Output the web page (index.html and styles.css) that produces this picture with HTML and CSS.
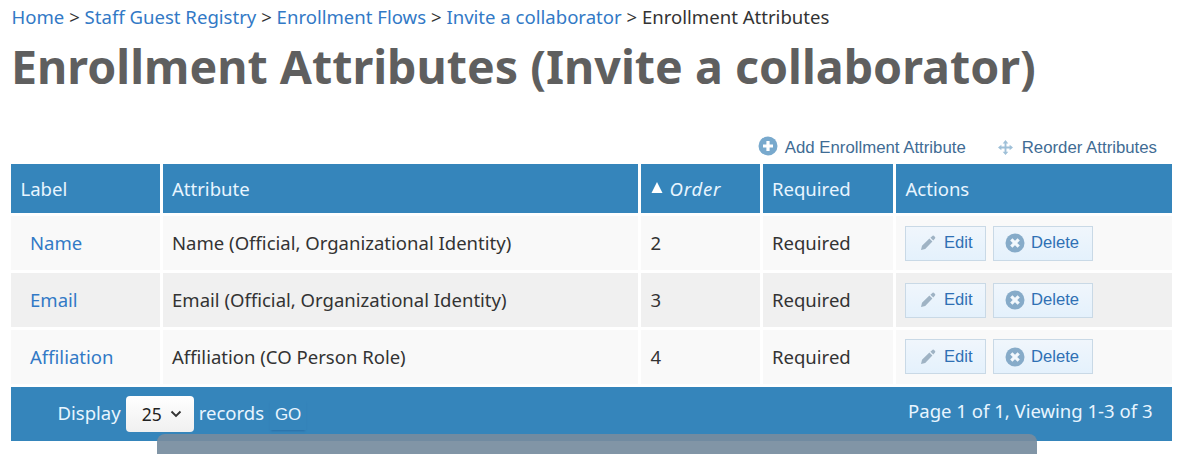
FILE: index.html
```html
<!DOCTYPE html>
<html lang="en">
<head>
<meta charset="utf-8">
<title>Enrollment Attributes</title>
<link rel="stylesheet" href="styles.css">
</head>
<body>
<svg class="defs" aria-hidden="true">
  <symbol id="plus" viewBox="0 0 20 20"><circle cx="10" cy="10" r="9.5" fill="#78a9cd"/><path d="M10 5v10M5 10h10" stroke="#fff" stroke-width="3.2"/></symbol>
  <symbol id="move" viewBox="0 0 16 16"><path d="M8 2v12M2 8h12" stroke="#9fc0d8" stroke-width="2"/><path d="M8 0l3 3.600H5zM8 16l3-3.600H5zM0 8l3.600-3v6zM16 8l-3.600-3v6z" fill="#9fc0d8"/></symbol>
  <symbol id="pencil" viewBox="0 0 16 16"><path d="M1 15l1-4.200L9.400 3.600l3 3L5.200 14zM10.400 2.700L12.600.8q.8-.5 1.500.2l.9.9q.7.8 0 1.500L13.300 5.600z" fill="#9fb3c4"/></symbol>
  <symbol id="cross" viewBox="0 0 20 20"><circle cx="10" cy="10" r="9.500" fill="#86abc9"/><path d="M6.300 6.300l7.400 7.400M13.700 6.300l-7.400 7.400" stroke="#f2f8fd" stroke-width="3.200"/></symbol>
</svg>
<nav class="crumbs"><a>Home</a> &gt; <a>Staff Guest Registry</a> &gt; <a>Enrollment Flows</a> &gt; <a>Invite a collaborator</a> &gt; <span>Enrollment Attributes</span></nav>
<h1 class="title">Enrollment Attributes (Invite a collaborator)</h1>
<div class="tools">
  <a class="tool"><svg class="i-plus"><use href="#plus"/></svg>Add Enrollment Attribute</a>
  <a class="tool"><svg class="i-move"><use href="#move"/></svg>Reorder Attributes</a>
</div>
<main class="grid">
  <div class="row head"><div>Label</div><div>Attribute</div><div><svg class="sort" viewBox="0 0 12 11"><path d="M6 0l5.500 11H.5z" fill="#fff"/></svg><i>Order</i></div><div>Required</div><div>Actions</div></div>
  <div class="row"><div class="label"><a>Name</a></div><div>Name (Official, Organizational Identity)</div><div>2</div><div>Required</div><div class="actions"><a class="btn edit"><svg><use href="#pencil"/></svg>Edit</a><a class="btn delete"><svg><use href="#cross"/></svg>Delete</a></div></div>
  <div class="row alt"><div class="label"><a>Email</a></div><div>Email (Official, Organizational Identity)</div><div>3</div><div>Required</div><div class="actions"><a class="btn edit"><svg><use href="#pencil"/></svg>Edit</a><a class="btn delete"><svg><use href="#cross"/></svg>Delete</a></div></div>
  <div class="row last"><div class="label"><a>Affiliation</a></div><div>Affiliation (CO Person Role)</div><div>4</div><div>Required</div><div class="actions"><a class="btn edit"><svg><use href="#pencil"/></svg>Edit</a><a class="btn delete"><svg><use href="#cross"/></svg>Delete</a></div></div>
  <footer class="pager">
    <span class="display">Display</span><span class="select">25<svg viewBox="0 0 12 8"><path d="M1.500 1.500L6 6l4.500-4.500" fill="none" stroke="#333" stroke-width="1.900"/></svg></span><span class="records">records</span><span class="go">GO</span>
    <span class="status">Page 1 of 1, Viewing 1-3 of 3</span>
  </footer>
</main>
<div class="overlay"></div>
</body>
</html>
```
FILE: styles.css
```css
* { box-sizing: border-box; }
body { margin: 0; height: 454px; overflow: hidden; background: #fff; color: #333; font: 18.55px/24px "Noto Sans", sans-serif; position: relative; }
a { color: #3279c6; }
.defs { display: none; }
.crumbs { padding: 5px 0 0 11.5px; font-size: 18.57px; white-space: nowrap; }
.title { margin: 5px 0 0 11px; font-size: 46.55px; line-height: 64px; font-weight: 700; color: #5f5f5f; white-space: nowrap; }
.tools { display: flex; justify-content: flex-end; gap: 32px; padding-right: 25px; margin-top: 37px; height: 29px; font: 16.8px/24px "Liberation Sans", sans-serif; }
.tool { display: flex; align-items: center; height: 25px; color: #3f6c94; white-space: nowrap; }
.i-plus { width: 20px; height: 20px; margin: -3px 7px 0 0; }
.i-move { width: 15px; height: 15px; margin: -1px 9px 0 0; }
.grid { width: 1160.5px; margin-left: 11px; display: grid; gap: 3px; }
.row { display: grid; grid-template-columns: 149px 475px 119px 130px 275.5px; gap: 3px; height: 54px; }
.row > div { display: flex; align-items: center; padding-left: 9.5px; background: #f9f9f9; white-space: nowrap; }
.row > div:nth-child(2), .row > div:nth-child(4) { padding-left: 9px; }
.row.alt > div { background: #f0f0f0; }
.row.last > div { padding-bottom: 1px; }
.row.head { height: 49px; }
.row.head > div { background: #3585bb; color: #e8f5ff; }
.row.head i { letter-spacing: .8px; }
.row > .label { padding-left: 19px; }
.sort { width: 12px; height: 11px; margin: -2px 7px 0 0; }
.row > .actions { gap: 7px; padding-left: 9px; }
.btn { display: flex; align-items: center; height: 35px; border: 1px solid #c9d9e6; background: linear-gradient(#f0f6fc, #e4f1fc); color: #2f70b4; font: 16.600px/24px "Liberation Sans", sans-serif; }
.edit { width: 81px; padding-left: 14px; }
.edit svg { width: 16px; height: 16px; margin-right: 8px; }
.delete { width: 100px; padding-left: 11px; }
.delete svg { width: 20px; height: 20px; margin-right: 6px; }
.pager { display: flex; height: 54px; padding: 0 19px 0 46.5px; background: #3585bb; color: #e8f5ff; align-items: center; white-space: nowrap; }
.display, .records { margin-top: -2px; }
.select { display: flex; align-items: center; width: 68px; height: 36px; margin: 0 5px; padding-left: 16px; border-radius: 4px; background: linear-gradient(#fff, #f0f0f0); color: #222; font-size: 17.5px; }
.select svg { width: 12px; height: 8px; margin-left: 8px; }
.go { margin: 2px 0 0 6px; width: 36px; height: 30px; font: 17px/30px "Liberation Sans", sans-serif; text-align: center; box-shadow: 0 2px 2px -1px #2a6fa6; }
.status { margin: -6px 0 0 auto; }
.overlay { position: absolute; left: 157px; top: 434px; width: 880px; height: 30px; border-radius: 8px; background: rgba(118, 140, 158, .92); }
```
